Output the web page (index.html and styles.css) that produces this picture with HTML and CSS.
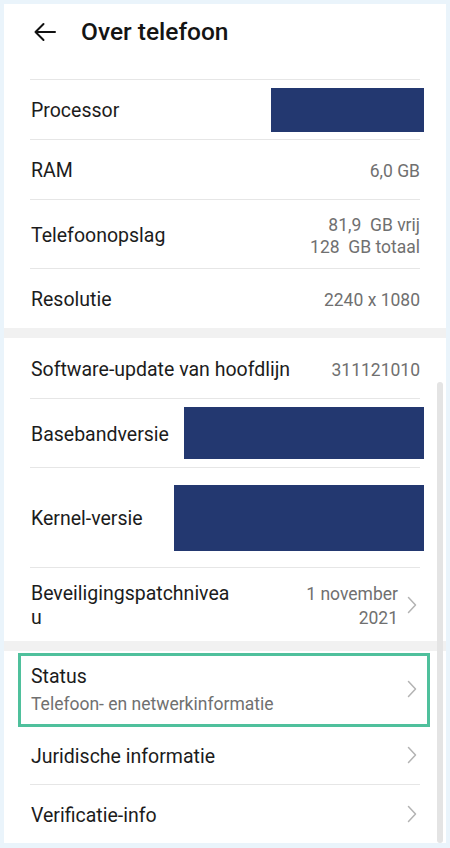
FILE: index.html
```html
<!DOCTYPE html>
<html lang="nl">
<head>
<meta charset="utf-8">
<title>Over telefoon</title>
<link rel="stylesheet" href="styles.css">
</head>
<body>
<div class="screen">
  <div class="panel">
    <section class="card">
      <header class="appbar">
        <svg class="back" width="26" height="26" viewBox="0 0 26 26" aria-hidden="true">
          <path d="M23 13 H3.5 M11.5 5 L3.5 13 L11.5 21" fill="none" stroke="#111" stroke-width="2" stroke-linecap="round" stroke-linejoin="round"/>
        </svg>
        <h1 class="title">Over telefoon</h1>
      </header>
      <div class="row h60">
        <span class="label">Processor</span>
        <span class="redact r-proc"></span>
      </div>
      <div class="row h60">
        <span class="label">RAM</span>
        <span class="value">6,0 GB</span>
      </div>
      <div class="row h69">
        <span class="label">Telefoonopslag</span>
        <span class="value lines">81,9&nbsp; GB vrij<br>128&nbsp; GB totaal</span>
      </div>
      <div class="row h60">
        <span class="label">Resolutie</span>
        <span class="value">2240 x 1080</span>
      </div>
    </section>

    <section class="card">
      <div class="row h60">
        <span class="label">Software-update van hoofdlijn</span>
        <span class="value">311121010</span>
      </div>
      <div class="row h69">
        <span class="label">Basebandversie</span>
        <span class="redact r-base"></span>
      </div>
      <div class="row h100">
        <span class="label">Kernel-versie</span>
        <span class="redact r-kern"></span>
      </div>
      <div class="row h74">
        <span class="label two">Beveiligingspatchnivea<br>u</span>
        <span class="value two">1 november<br>2021</span>
        <svg class="chev" width="10" height="18" viewBox="0 0 10 18" aria-hidden="true"><path d="M1.5 1.5 L8.5 9 L1.5 16.5" fill="none" stroke="#b3b3b3" stroke-width="1.5" stroke-linecap="round" stroke-linejoin="round"/></svg>
      </div>
    </section>

    <section class="card">
      <div class="row h75 highlighted">
        <div class="stack">
          <span class="label">Status</span>
          <span class="sub">Telefoon- en netwerkinformatie</span>
        </div>
        <svg class="chev" width="10" height="18" viewBox="0 0 10 18" aria-hidden="true"><path d="M1.5 1.5 L8.5 9 L1.5 16.5" fill="none" stroke="#b3b3b3" stroke-width="1.5" stroke-linecap="round" stroke-linejoin="round"/></svg>
      </div>
      <div class="row h58 plain">
        <span class="label">Juridische informatie</span>
        <svg class="chev push" width="10" height="18" viewBox="0 0 10 18" aria-hidden="true"><path d="M1.5 1.5 L8.5 9 L1.5 16.5" fill="none" stroke="#b3b3b3" stroke-width="1.5" stroke-linecap="round" stroke-linejoin="round"/></svg>
      </div>
      <div class="row h59">
        <span class="label">Verificatie-info</span>
        <svg class="chev push" width="10" height="18" viewBox="0 0 10 18" aria-hidden="true"><path d="M1.5 1.5 L8.5 9 L1.5 16.5" fill="none" stroke="#b3b3b3" stroke-width="1.5" stroke-linecap="round" stroke-linejoin="round"/></svg>
      </div>
    </section>

    <div class="scrollbar"></div>
  </div>
</div>
</body>
</html>
```

FILE: styles.css
```css
* { box-sizing: border-box; }

html, body {
  margin: 0;
  padding: 0;
}

body {
  background: #eaf4fb;
  font-family: Roboto, "Noto Sans", "Liberation Sans", sans-serif;
  color: #1c1c1c;
}

.screen {
  padding: 4px 4px 5px 4px;
}

.panel {
  position: relative;
  background: #f1f1f1;
  display: flex;
  flex-direction: column;
  gap: 10px;
  height: 839px;
  overflow: hidden;
}

.card {
  background: #ffffff;
  display: flex;
  flex-direction: column;
  padding: 0 26px;
}

.appbar {
  height: 75px;
  display: flex;
  align-items: center;
  padding-bottom: 19px;
  margin-left: 2px;
}

.back {
  display: block;
  flex: none;
}

.title {
  margin: 0 0 0 23px;
  font-size: 24.5px;
  font-weight: 500;
  line-height: 32px;
  color: #141414;
}

.row {
  display: flex;
  align-items: center;
  gap: 9px;
}

.appbar + .row,
.row + .row {
  border-top: 1px solid #e6e6e6;
}

.row.plain { border-top: 0; }

.h58 { height: 58px; }
.h59 { height: 59px; }
.h60 { height: 60px; }
.h69 { height: 69px; }
.h74 { height: 74px; }
.h75 { height: 75px; }
.h100 { height: 100px; }

.label {
  font-size: 19.5px;
  line-height: 26px;
  color: #1c1c1c;
  padding-left: 1px;
  white-space: nowrap;
  margin-top: 3px;
}

.stack .label {
  margin-top: 0;
}

.label.two,
.value.two {
  line-height: 24px;
}

.value {
  margin-left: auto;
  font-size: 17.5px;
  line-height: 24px;
  color: #707070;
  text-align: right;
  white-space: nowrap;
  margin-top: 3px;
}

.value.lines {
  line-height: 22px;
}

.redact {
  margin-left: auto;
  margin-right: -4px;
  background: #233870;
  flex: none;
}

.r-proc { width: 153px; height: 44px; }
.r-base { width: 240px; height: 52px; }
.r-kern { width: 250px; height: 66px; }

.chev {
  flex: none;
  margin-right: 3px;
  display: block;
}

.chev.push {
  margin-left: auto;
}

.stack {
  display: flex;
  flex-direction: column;
  gap: 2px;
  margin-right: auto;
  margin-top: 2px;
}

.sub {
  font-size: 17.5px;
  line-height: 24px;
  color: #707070;
  padding-left: 1px;
}

.highlighted {
  position: relative;
}

.highlighted::after {
  content: "";
  position: absolute;
  left: -12px;
  right: -10px;
  top: 2px;
  bottom: -1px;
  border: 3px solid #4fc09c;
  pointer-events: none;
}

.scrollbar {
  position: absolute;
  right: 3px;
  top: 378px;
  bottom: 0;
  width: 6px;
  background: #e4e4e4;
  border-radius: 3px;
}
```
